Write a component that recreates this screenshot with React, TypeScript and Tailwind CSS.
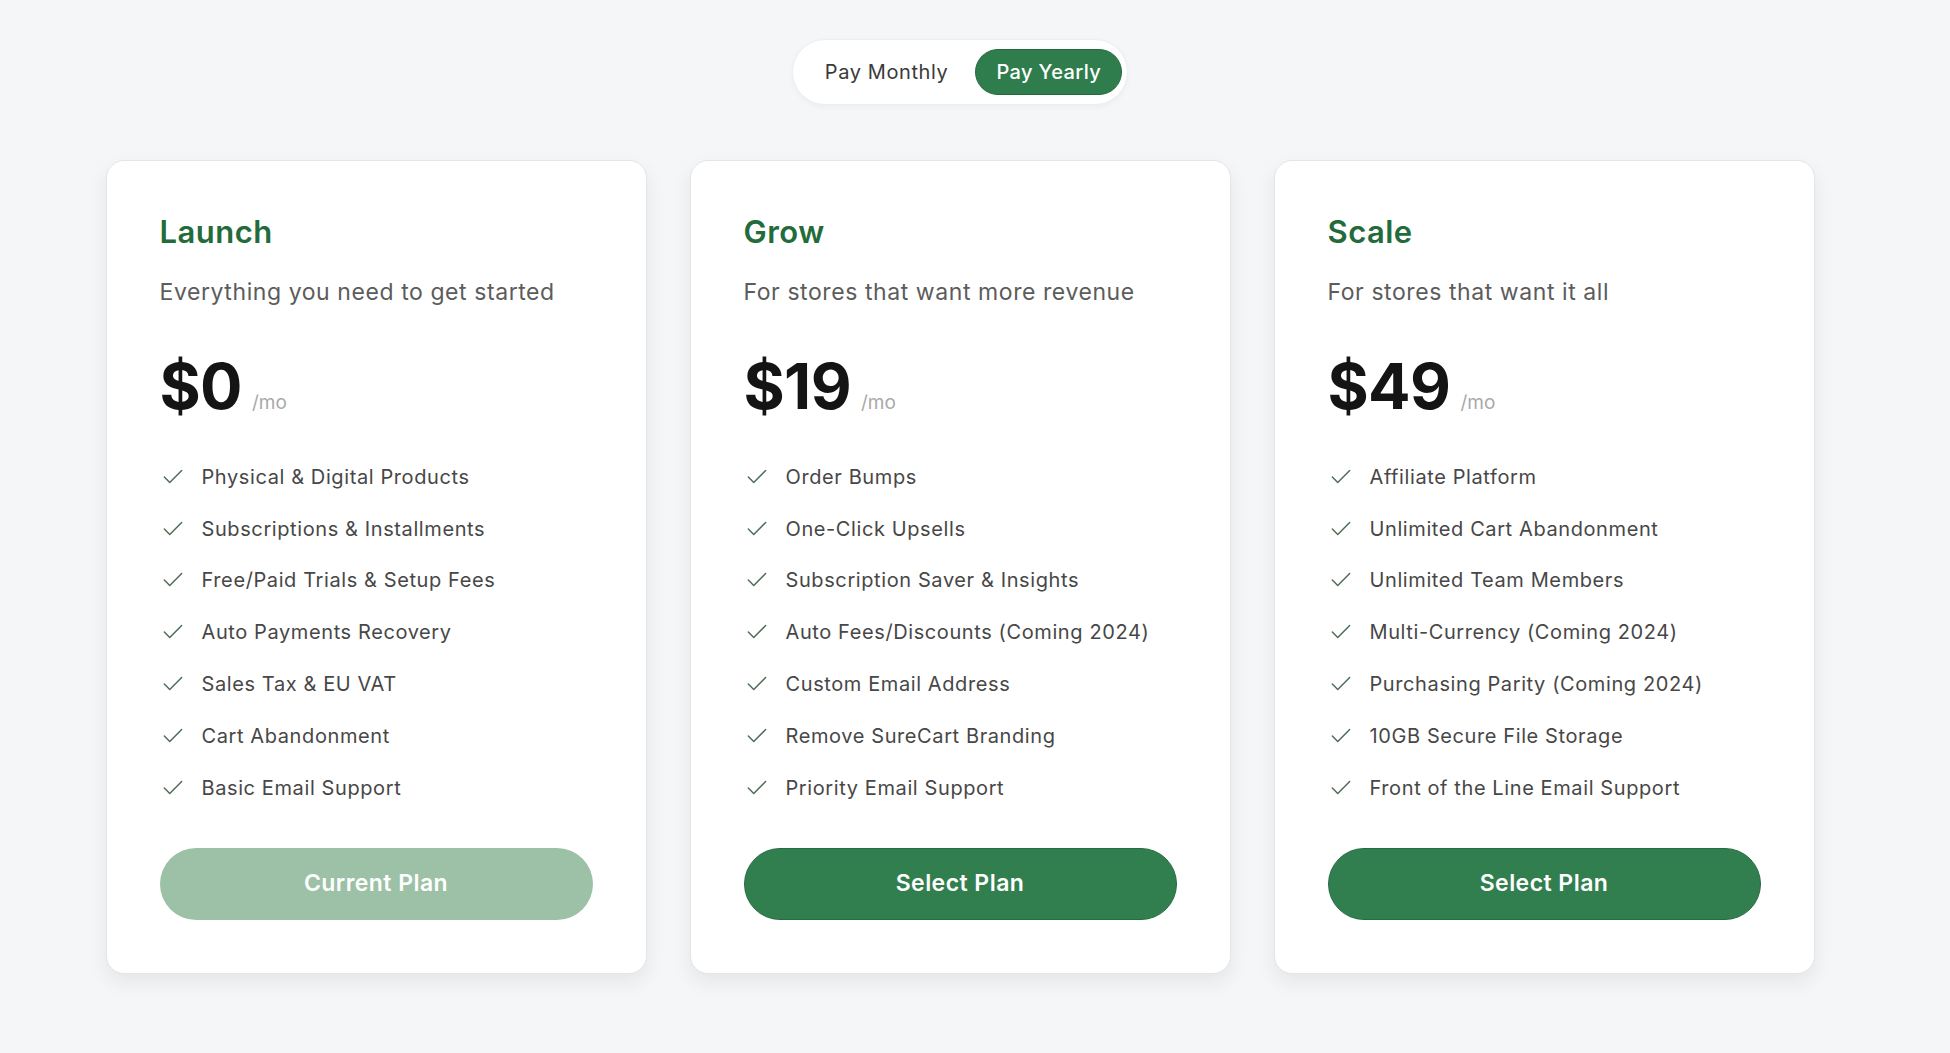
import { Check } from 'lucide-react'

type Plan = {
  name: string
  tagline: string
  price: string
  features: string[]
  current?: boolean
}

const plans: Plan[] = [
  {
    name: 'Launch',
    tagline: 'Everything you need to get started',
    price: '$0',
    current: true,
    features: [
      'Physical & Digital Products',
      'Subscriptions & Installments',
      'Free/Paid Trials & Setup Fees',
      'Auto Payments Recovery',
      'Sales Tax & EU VAT',
      'Cart Abandonment',
      'Basic Email Support',
    ],
  },
  {
    name: 'Grow',
    tagline: 'For stores that want more revenue',
    price: '$19',
    features: [
      'Order Bumps',
      'One-Click Upsells',
      'Subscription Saver & Insights',
      'Auto Fees/Discounts (Coming 2024)',
      'Custom Email Address',
      'Remove SureCart Branding',
      'Priority Email Support',
    ],
  },
  {
    name: 'Scale',
    tagline: 'For stores that want it all',
    price: '$49',
    features: [
      'Affiliate Platform',
      'Unlimited Cart Abandonment',
      'Unlimited Team Members',
      'Multi-Currency (Coming 2024)',
      'Purchasing Parity (Coming 2024)',
      '10GB Secure File Storage',
      'Front of the Line Email Support',
    ],
  },
]

function PlanCard({ plan }: { plan: Plan }) {
  return (
    <div className="flex w-[541px] flex-col rounded-[18px] border border-[#e4e5e8] bg-white px-[53px] pt-[53px] pb-[53px] shadow-[0_8px_20px_rgba(0,0,0,0.07)]">
      <h2 className="text-[31px] leading-[36px] font-semibold tracking-[0.015em] text-[#236b3b]">{plan.name}</h2>
      <p className="mt-[27px] text-[23px] leading-[30px] tracking-[0.025em] text-[#5c5c5c]">{plan.tagline}</p>

      <div className="mt-[48px] flex items-baseline gap-[10px]">
        <span className="text-[63px] leading-none font-bold tracking-[-0.01em] text-[#141414]">{plan.price}</span>
        <span className="text-[19px] text-[#a9a9a9]">/mo</span>
      </div>

      <ul className="mt-[33px]">
        {plan.features.map((f) => (
          <li key={f} className="flex h-[51.8px] items-center gap-[16px]">
            <Check className="h-[26px] w-[26px] shrink-0 text-[#4f6d59]" strokeWidth={1.4} />
            <span className="text-[20px] tracking-[0.03em] text-[#474747]">{f}</span>
          </li>
        ))}
      </ul>

      <button
        className={`mt-[34px] h-[72px] w-full rounded-full text-[23px] font-semibold tracking-[0.02em] ${
          plan.current
            ? 'bg-[#9cc1a6] text-white'
            : 'border border-[#276b42] bg-[#317f4f] text-white'
        }`}
      >
        {plan.current ? 'Current Plan' : 'Select Plan'}
      </button>
    </div>
  )
}

export default function App() {
  return (
    <div
      className="flex min-h-screen flex-col items-center bg-[#f5f6f8] pt-[39px] pr-[30px]"
      style={{ fontFamily: 'Inter, "Noto Sans", sans-serif' }}
    >
      <div className="flex items-center rounded-full border border-[#eceef0] bg-white py-[9px] pr-[5px] pl-[9px] shadow-[0_2px_6px_rgba(0,0,0,0.04)]">
        <button className="h-[46px] px-[23px] text-[20px] tracking-[0.03em] text-[#3a3a3a]">Pay Monthly</button>
        <button className="ml-[4px] h-[46px] rounded-full border border-[#256a3f] bg-[#2f7d4c] px-[20px] text-[20px] font-medium tracking-[0.02em] text-white">
          Pay Yearly
        </button>
      </div>

      <div className="mt-[55px] flex gap-[43px]">
        {plans.map((p) => (
          <PlanCard key={p.name} plan={p} />
        ))}
      </div>
    </div>
  )
}
